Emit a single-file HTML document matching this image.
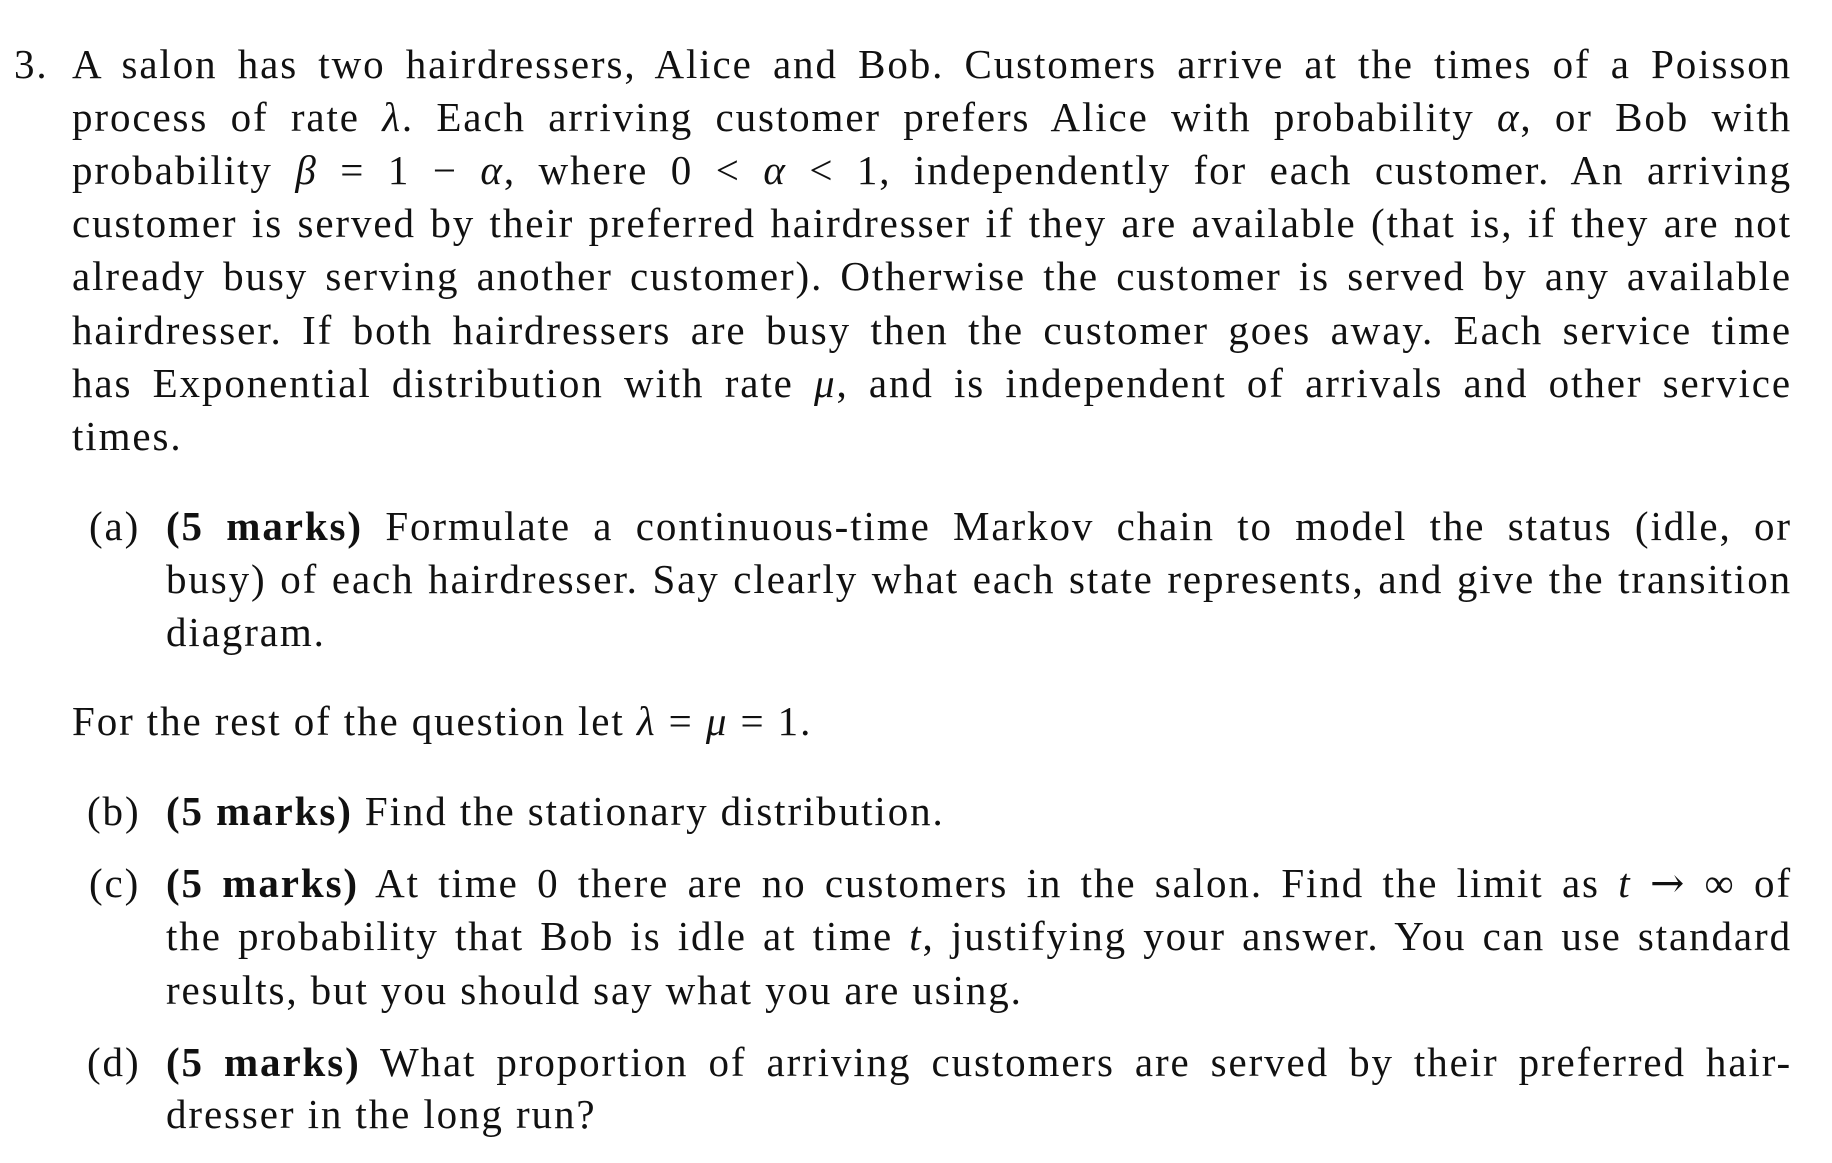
<!DOCTYPE html>
<html><head><meta charset="utf-8"><style>
html,body{margin:0;padding:0;background:#fff;}
body{width:1832px;height:1163px;position:relative;overflow:hidden;font-family:"Liberation Serif",serif;font-size:41px;letter-spacing:1.9px;color:#111;}
.l{position:absolute;height:53px;line-height:53px;white-space:nowrap;overflow:hidden;}
.j{text-align:justify;text-align-last:justify;white-space:normal;}
i{font-style:italic;}
b{font-weight:bold;}
</style></head><body>
<div class="l" style="left:14px;top:38px;">3.</div>
<div class="l j" style="left:72px;width:1720px;top:38px;">A salon has two hairdressers, Alice and Bob. Customers arrive at the times of a Poisson</div>
<div class="l j" style="left:72px;width:1720px;top:91px;">process of rate <i>λ</i>. Each arriving customer prefers Alice with probability <i>α</i>, or Bob with</div>
<div class="l j" style="left:72px;width:1720px;top:144px;">probability <i>β</i> = 1 − <i>α</i>, where 0 &lt; <i>α</i> &lt; 1, independently for each customer. An arriving</div>
<div class="l j" style="left:72px;width:1720px;top:197px;">customer is served by their preferred hairdresser if they are available (that is, if they are not</div>
<div class="l j" style="left:72px;width:1720px;top:250px;">already busy serving another customer). Otherwise the customer is served by any available</div>
<div class="l j" style="left:72px;width:1720px;top:304px;">hairdresser. If both hairdressers are busy then the customer goes away. Each service time</div>
<div class="l j" style="left:72px;width:1720px;top:357px;">has Exponential distribution with rate <i>μ</i>, and is independent of arrivals and other service</div>
<div class="l" style="left:72px;top:410px;">times.</div>

<div class="l" style="left:89px;top:500px;">(a)</div>
<div class="l j" style="left:166px;width:1626px;top:500px;"><b>(5 marks)</b> Formulate a continuous-time Markov chain to model the status (idle, or</div>
<div class="l j" style="left:166px;width:1626px;top:553px;">busy) of each hairdresser. Say clearly what each state represents, and give the transition</div>
<div class="l" style="left:166px;top:606px;">diagram.</div>

<div class="l" style="left:72px;top:695px;">For the rest of the question let <i>λ</i> = <i>μ</i> = 1.</div>

<div class="l" style="left:87px;top:785px;">(b)</div>
<div class="l" style="left:166px;top:785px;"><b>(5 marks)</b> Find the stationary distribution.</div>

<div class="l" style="left:89px;top:857px;">(c)</div>
<div class="l j" style="left:166px;width:1626px;top:857px;"><b>(5 marks)</b> At time 0 there are no customers in the salon. Find the limit as <i>t</i>&nbsp;<span style="font-family:'DejaVu Serif',serif;">→</span>&nbsp;∞ of</div>
<div class="l j" style="left:166px;width:1626px;top:910px;">the probability that Bob is idle at time <i>t</i>, justifying your answer. You can use standard</div>
<div class="l" style="left:166px;top:964px;">results, but you should say what you are using.</div>

<div class="l" style="left:87px;top:1036px;">(d)</div>
<div class="l j" style="left:166px;width:1626px;top:1036px;"><b>(5 marks)</b> What proportion of arriving customers are served by their preferred hair-</div>
<div class="l" style="left:166px;top:1088px;">dresser in the long run?</div>
</body></html>
